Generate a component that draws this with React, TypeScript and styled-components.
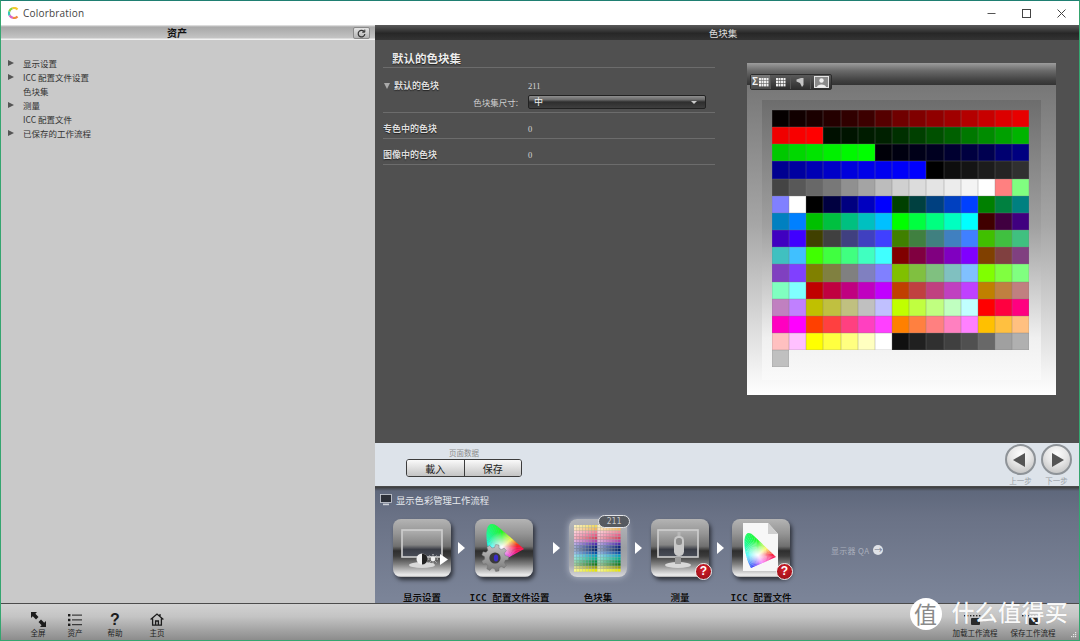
import React from 'react';
import styled, { createGlobalStyle } from 'styled-components';

const CJK = '"Noto Sans CJK SC", "Noto Sans", sans-serif';
const MONO = '"DejaVu Sans Mono", "Noto Sans CJK SC", monospace';

const GlobalStyle = createGlobalStyle`
  html, body { margin: 0; padding: 0; background: #fff; }
  * { box-sizing: border-box; }
`;

// ---- swatch data: ramps, then the 5 level colour cube
const toHex = (n: number) => n.toString(16).padStart(2, '0');
const LEVELS = [0x00, 0x40, 0x80, 0xc0, 0xff];
const cube: string[] = [];
LEVELS.forEach((r) =>
  LEVELS.forEach((g) =>
    LEVELS.forEach((b) => cube.push(`#${toHex(r)}${toHex(g)}${toHex(b)}`))
  )
);

const SWATCHES = [
  '#050000', '#110000', '#1a0000', '#240000', '#300000', '#3c0000', '#550000', '#700000', '#800000', '#900000', '#a00000', '#b40000', '#c80000', '#dc0000', '#e80000',
  '#f00000', '#f80000', '#ff0000', '#001000', '#001400', '#001c00', '#002000', '#003000', '#004000', '#005000', '#006000', '#007800', '#008c00', '#00a000', '#00b400',
  '#00c800', '#00d800', '#00e400', '#00f000', '#00f800', '#00ff00', '#000008', '#000010', '#000018', '#000020', '#000030', '#000040', '#000050', '#000070', '#000080',
  '#000090', '#0000a0', '#0000b4', '#0000c8', '#0000dc', '#0000e8', '#0000f0', '#0000f8', '#0000ff', '#000000', '#0e0e0e', '#141414', '#1c1c1c', '#242424', '#303030',
  '#444444', '#585858', '#686868', '#787878', '#909090', '#a4a4a4', '#bcbcbc', '#d0d0d0', '#dcdcdc', '#e4e4e4', '#ececec', '#f4f4f4', '#ffffff', '#ff8080', '#80ff80',
  '#8080ff', '#ffffff',
  ...cube,
  '#101010', '#202020', '#303030', '#404040', '#505050', '#686868', '#a0a0a0', '#b0b0b0',
  '#c0c0c0',
];

// ---- page frame
const Window = styled.div`
  position: relative;
  width: 1080px;
  height: 641px;
  overflow: hidden;
  display: flex;
  flex-direction: column;
  border-top: 1px solid #1f7f72;
  border-left: 1px solid #35a56f;
  border-right: 1px solid #35a56f;
  border-bottom: 1px solid #35a56f;
  font-family: ${CJK};
`;

const TitleBar = styled.div`
  height: 24px;
  flex: none;
  display: flex;
  align-items: center;
  background: #fff;
  padding-left: 7px;
`;

const AppName = styled.span`
  margin-left: 4px;
  font-family: "Open Sans", sans-serif;
  font-size: 10px;
  letter-spacing: 0.2px;
  color: #444;
`;

const WinControls = styled.div`
  margin-left: auto;
  display: flex;
`;

const WinButton = styled.div`
  width: 35px;
  height: 24px;
  display: flex;
  align-items: center;
  justify-content: center;
`;

const Body = styled.div`
  height: 578px;
  flex: none;
  display: flex;
`;

// ---- left assets panel
const LeftPanel = styled.div`
  width: 374px;
  flex: none;
  background: #c9c9c9;
`;

const AssetHeader = styled.div`
  position: relative;
  height: 15px;
  padding-right: 22px;
  display: flex;
  align-items: center;
  justify-content: center;
  background: linear-gradient(#ececec 0, #a9a9a9 2px, #b4b4b4 7px, #c4c4c4 13px, #f2f2f2 14px);
  font-size: 10px;
  font-weight: 700;
  color: #111;
`;

const RefreshButton = styled.div`
  position: absolute;
  right: 5px;
  top: 2px;
  width: 17px;
  height: 12px;
  border: 1px solid #8a8a8a;
  border-radius: 2px;
  background: linear-gradient(#e4e4e4, #b4b4b4);
  display: flex;
  align-items: center;
  justify-content: center;
`;

const Tree = styled.div`
  padding: 16px 0 0 7px;
`;

const TreeRow = styled.div`
  height: 14px;
  display: flex;
  align-items: center;
  font-size: 8.5px;
  color: #333;
`;

const TreeSlot = styled.div`
  width: 15px;
  flex: none;
`;

const TreeArrow = styled.div`
  width: 0;
  height: 0;
  border-left: 6px solid #555;
  border-top: 3.5px solid transparent;
  border-bottom: 3.5px solid transparent;
`;

// ---- right side
const RightPanel = styled.div`
  flex: 1;
  min-width: 0;
  display: flex;
  flex-direction: column;
`;

const DarkHeader = styled.div`
  height: 15px;
  flex: none;
  padding-right: 8px;
  display: flex;
  align-items: center;
  justify-content: center;
  background: linear-gradient(#5a5a5a, #272727 55%, #333);
  font-size: 9.5px;
  color: #ddd;
`;

const Content = styled.div`
  height: 403px;
  flex: none;
  display: flex;
  gap: 32px;
  padding-left: 8px;
  background: #505050;
`;

const FormColumn = styled.div`
  width: 332px;
  flex: none;
`;

const FormTitle = styled.div`
  margin-top: 8px;
  height: 20px;
  padding: 1px 0 0 9px;
  border-bottom: 1px solid #6c6c6c;
  font-size: 11.5px;
  line-height: 18px;
  font-weight: 700;
  color: #ececec;
  text-shadow: 0 1px 1px #222;
`;

const FormRow = styled.div<{ $open?: boolean }>`
  padding: ${(p) => (p.$open ? '11px 0 3px' : '9px 0 4px')};
  border-bottom: 1px solid #6c6c6c;
`;

const RowLine = styled.div`
  display: grid;
  grid-template-columns: 145px 1fr;
  height: 12px;
  align-items: center;
`;

const RowLabel = styled.div`
  display: flex;
  align-items: center;
  gap: 4px;
  font-size: 9px;
  font-weight: 700;
  color: #dcdcdc;
  text-shadow: 0 1px 1px #222;
`;

const OpenArrow = styled.span`
  margin-left: 1px;
  width: 0;
  height: 0;
  border-top: 6px solid #aaa;
  border-left: 3.5px solid transparent;
  border-right: 3.5px solid transparent;
`;

const RowValue = styled.div`
  font-family: "Liberation Serif", serif;
  font-size: 8.5px;
  color: #d6d6d6;
`;

const SelectLine = styled.div`
  margin-top: 4px;
  display: grid;
  grid-template-columns: 145px 178px;
  align-items: center;
`;

const SelectLabel = styled.div`
  padding-right: 10px;
  text-align: right;
  font-size: 8.5px;
  color: #cfcfcf;
`;

const Select = styled.div`
  height: 14px;
  display: flex;
  align-items: center;
  justify-content: space-between;
  padding: 0 8px 2px 5px;
  border: 1px solid #222;
  border-radius: 2px;
  background: linear-gradient(#8e8e8e, #6a6a6a 30%, #2e2e2e 50%, #3e3e3e);
  font-size: 9px;
  color: #f0f0f0;
`;

const SelectCaret = styled.span`
  width: 0;
  height: 0;
  margin-top: 3px;
  border-top: 3px solid #ccc;
  border-left: 3px solid transparent;
  border-right: 3px solid transparent;
`;

const Preview = styled.div`
  width: 309px;
  flex: none;
  margin-top: 23px;
`;

const PreviewBar = styled.div`
  height: 22px;
  padding: 3px;
  background: linear-gradient(#9c9c9c, #6a6a6a 35%, #404040 80%, #333);
`;

const ToolGroup = styled.div`
  display: inline-flex;
  height: 16px;
  border: 1px solid #2c2c2c;
  border-radius: 2px;
  background: linear-gradient(#5a5a5a, #2e2e2e);
`;

const ToolButton = styled.div<{ $active?: boolean }>`
  width: 20px;
  display: flex;
  align-items: center;
  justify-content: center;
  gap: 1px;
  border-right: 1px solid #555;
  background: ${(p) => (p.$active ? 'linear-gradient(#7a7a7a, #484848)' : 'transparent')};
  &:last-child { border-right: 0; }
`;

const Sigma = styled.span`
  font-family: "Liberation Sans", sans-serif;
  font-size: 10px;
  font-weight: 700;
  line-height: 1;
  color: #f2f2f2;
`;

const SwatchStage = styled.div`
  height: 310px;
  padding: 15px 15px 15px;
  background: linear-gradient(#777, #a6a6a6 45%, #fff);
`;

const SwatchInner = styled.div`
  height: 280px;
  padding: 10px 0 0 10px;
  background: linear-gradient(#6d6d6d, #a0a0a0 45%, #f0f0f0 85%, #fafafa);
`;

const SwatchGrid = styled.div`
  display: grid;
  grid-template-columns: repeat(15, 17.17px);
  grid-auto-rows: 17.17px;
`;

const Swatch = styled.div`
  box-shadow: inset 0 0 0 0.5px rgba(120, 120, 120, 0.35);
`;

// ---- page data strip
const DataBar = styled.div`
  height: 43px;
  flex: none;
  display: flex;
  background: #dde3ea;
  padding: 1px 7px 0 31px;
`;

const DataGroup = styled.div`
  width: 116px;
  display: flex;
  flex-direction: column;
  align-items: center;
  padding-top: 4px;
`;

const DataCaption = styled.div`
  font-size: 7.5px;
  line-height: 10px;
  color: #8c8c8c;
`;

const Segmented = styled.div`
  width: 116px;
  height: 18px;
  margin-top: 1px;
  display: flex;
  border: 1px solid #3c3c3c;
  border-radius: 3px;
  overflow: hidden;
`;

const SegmentButton = styled.div`
  flex: 1;
  display: flex;
  align-items: center;
  justify-content: center;
  background: linear-gradient(#fafafa, #c4c4c4);
  font-size: 10px;
  color: #222;
  & + & { border-left: 1px solid #3c3c3c; }
`;

const NavGroup = styled.div`
  margin-left: auto;
  display: flex;
  gap: 5px;
`;

const NavItem = styled.div`
  width: 31px;
  display: flex;
  flex-direction: column;
  align-items: center;
`;

const NavCircle = styled.div`
  width: 31px;
  height: 31px;
  border-radius: 50%;
  border: 2px solid #8e9398;
  background: radial-gradient(circle at 50% 30%, #fdfdfd, #e6e6e6 45%, #b8b8b8);
  display: flex;
  align-items: center;
  justify-content: center;
`;

const NavTriangle = styled.div<{ $back?: boolean }>`
  width: 0;
  height: 0;
  border-top: 7px solid transparent;
  border-bottom: 7px solid transparent;
  ${(p) =>
    p.$back
      ? 'border-right: 12px solid #555; margin-right: 3px;'
      : 'border-left: 12px solid #555; margin-left: 3px;'}
`;

const NavLabel = styled.div`
  margin-top: 1px;
  font-size: 7.5px;
  line-height: 10px;
  white-space: nowrap;
  color: #9a9fa6;
`;

// ---- workflow strip
const Workflow = styled.div`
  height: 117px;
  flex: none;
  overflow: hidden;
  border-top: 1px solid #4a4a4a;
  background: linear-gradient(#3c3c3c 0, #5f687c 4px, #6a7286 30px, #7c8599);
`;

const WorkflowHead = styled.div`
  height: 13px;
  margin: 6px 0 13px 5px;
  display: flex;
  align-items: center;
  gap: 4px;
  font-size: 9.3px;
  color: #e4e7ec;
`;

const FlowRow = styled.div`
  display: flex;
  align-items: flex-start;
  padding-left: 18px;
`;

const FlowItem = styled.div`
  width: 58px;
  flex: none;
  display: flex;
  flex-direction: column;
  align-items: center;
`;

const Tile = styled.div<{ $light?: boolean }>`
  position: relative;
  width: 58px;
  height: 58px;
  border-radius: 8px;
  background: ${(p) =>
    p.$light
      ? 'linear-gradient(#b4b6ba, #9c9ea3 50%, #a8aaaf 80%, #d8d8da)'
      : 'linear-gradient(#b4b4b4, #959595 25%, #707070 47%, #2e2e2e 55%, #3c3c3c 64%, #808080 78%, #d8d8d8 93%, #eee 97%, #aaa)'};
  box-shadow: ${(p) =>
    p.$light
      ? '0 0 7px rgba(235, 240, 250, 0.55)'
      : '2px 3px 4px rgba(0, 0, 0, 0.6)'};
`;

const FlowLabel = styled.div<{ $nudge?: number }>`
  margin: 15px 0 0 ${(p) => p.$nudge || 0}px;
  font-family: ${MONO};
  font-size: 9.5px;
  line-height: 12px;
  font-weight: 700;
  white-space: nowrap;
  color: #0c0c0c;
  text-shadow: 0 0 1px rgba(255, 255, 255, 0.3);
`;

const Connector = styled.div<{ $w: number; $pad: number }>`
  width: ${(p) => p.$w}px;
  height: 58px;
  flex: none;
  padding-left: ${(p) => p.$pad}px;
  display: flex;
  align-items: center;
`;

const ConnectorArrow = styled.div`
  width: 0;
  height: 0;
  border-left: 7px solid #fff;
  border-top: 6px solid transparent;
  border-bottom: 6px solid transparent;
`;

const CountPill = styled.div`
  position: absolute;
  top: -4px;
  right: -3px;
  width: 32px;
  height: 13px;
  border: 1px solid #e4e6ea;
  border-radius: 7px;
  background: #565a60;
  text-align: center;
  font-family: ${MONO};
  font-size: 8px;
  line-height: 11px;
  color: #c8c8c8;
`;

const ErrorBadge = styled.div`
  position: absolute;
  right: -3px;
  bottom: -3px;
  width: 17px;
  height: 17px;
  border: 1.5px solid #eee;
  border-radius: 50%;
  background: radial-gradient(circle at 50% 35%, #d8202c, #8e0d14);
  text-align: center;
  font-family: "Liberation Sans", sans-serif;
  font-size: 12px;
  line-height: 14px;
  font-weight: 700;
  color: #fff;
`;

const QaLink = styled.div`
  height: 58px;
  margin: 2px 0 0 41px;
  display: flex;
  align-items: center;
  gap: 4px;
  font-size: 8px;
  letter-spacing: 0.3px;
  color: #a9afbc;
`;

const QaCircle = styled.div`
  width: 10px;
  height: 10px;
  border-radius: 50%;
  background: #dfe2e7;
  display: flex;
  align-items: center;
  justify-content: center;
  font-size: 8px;
  line-height: 1;
  color: #6c7488;
`;

// ---- bottom toolbar
const BottomBar = styled.div`
  position: relative;
  height: 37px;
  flex: none;
  display: flex;
  padding-left: 19px;
  border-top: 1px solid #4c4c4c;
  background: linear-gradient(#d2d2d2, #c4c4c4 35%, #8c8c8c);
`;

const BarTool = styled.div<{ $gap?: number }>`
  width: 36px;
  margin-left: ${(p) => p.$gap || 0}px;
  padding-top: 8px;
  display: flex;
  flex-direction: column;
  align-items: center;
`;

const BarIcon = styled.div`
  height: 15px;
  display: flex;
  align-items: center;
  justify-content: center;
  font-family: "Liberation Sans", sans-serif;
  font-size: 16px;
  font-weight: 700;
  color: #1c1c1c;
`;

const BarLabel = styled.div`
  margin-top: 1px;
  font-size: 7.5px;
  line-height: 10px;
  white-space: nowrap;
  color: #222;
`;

const BarRight = styled.div`
  margin-left: auto;
  padding-right: 23px;
  display: flex;
  gap: 12px;
`;

const BarRightTool = styled(BarTool)`
  width: 46px;
`;

const GripMark = styled.svg`
  position: absolute;
  right: 2px;
  bottom: 2px;
`;

const Watermark = styled.div`
  position: absolute;
  right: 11px;
  bottom: 10px;
  display: flex;
  align-items: center;
  gap: 10px;
`;

const MarkCircle = styled.div`
  width: 32px;
  height: 32px;
  border-radius: 50%;
  background: #fff;
  text-align: center;
  font-size: 23px;
  line-height: 30px;
  color: #8a8a8a;
`;

const MarkText = styled.div`
  margin-top: -6px;
  font-size: 23px;
  line-height: 24px;
  font-weight: 500;
  letter-spacing: 0.3px;
  color: rgba(255, 255, 255, 0.95);
  text-shadow: 0 0 1px rgba(0, 0, 0, 0.15);
`;

// ---- drawings
const Logo = () => (
  <svg width="11" height="12" viewBox="0 0 11 12">
    <g fill="none" strokeWidth="2.2">
      <path d="M9.5 2.5 A5 5 0 0 0 4.5 1.2" stroke="#f6c92c" />
      <path d="M4.5 1.2 A5 5 0 0 0 1.2 4.6" stroke="#8ccf3a" />
      <path d="M1.2 4.6 A5 5 0 0 0 1.6 8.4" stroke="#35c7b8" />
      <path d="M1.6 8.4 A5 5 0 0 0 5 10.9" stroke="#d968c8" />
      <path d="M5 10.9 A5 5 0 0 0 9.5 9.4" stroke="#f08a3c" />
    </g>
  </svg>
);

const MiniGrid = () => (
  <svg width="10" height="9" viewBox="0 0 10 9">
    {[0, 1, 2].map((r) =>
      [0, 1, 2, 3].map((c) => (
        <rect key={`${r}-${c}`} x={c * 2.5} y={r * 3} width="2" height="2.4" fill="#eee" />
      ))
    )}
  </svg>
);

const HUE_STOPS: [number, number][] = [
  [-60, 300], [0, 350], [40, 420], [90, 480], [180, 540], [240, 590], [300, 660],
];

const hueAt = (a: number) => {
  for (let i = 1; i < HUE_STOPS.length; i++) {
    const [a0, h0] = HUE_STOPS[i - 1];
    const [a1, h1] = HUE_STOPS[i];
    if (a <= a1) return h0 + ((a - a0) / (a1 - a0)) * (h1 - h0);
  }
  return 300;
};

// horseshoe filled with a fan of hue wedges around the white point
const GamutFan = ({ id, d, cx, cy }: { id: string; d: string; cx: number; cy: number }) => {
  const wedges = [];
  for (let a = -60; a < 300; a += 6) {
    const a0 = (a * Math.PI) / 180;
    const a1 = ((a + 6.6) * Math.PI) / 180;
    wedges.push(
      <polygon
        key={a}
        points={`${cx},${cy} ${cx + 70 * Math.cos(a0)},${cy - 70 * Math.sin(a0)} ${cx + 70 * Math.cos(a1)},${cy - 70 * Math.sin(a1)}`}
        fill={`hsl(${hueAt(a + 3) % 360}, 95%, 55%)`}
      />
    );
  }
  return (
    <>
      <defs>
        <clipPath id={`${id}-clip`}>
          <path d={d} />
        </clipPath>
        <radialGradient id={`${id}-white`}>
          <stop offset="0" stopColor="#fff" />
          <stop offset="1" stopColor="#fff" stopOpacity="0" />
        </radialGradient>
      </defs>
      <g clipPath={`url(#${id}-clip)`}>
        {wedges}
        <circle cx={cx} cy={cy} r="15" fill={`url(#${id}-white)`} />
      </g>
    </>
  );
};

const gearPath = (cx: number, cy: number, rOut: number, rIn: number, teeth: number) => {
  const pts: string[] = [];
  const step = (Math.PI * 2) / teeth;
  for (let i = 0; i < teeth; i++) {
    const t = i * step;
    [
      [t - step * 0.32, rIn],
      [t - step * 0.18, rOut],
      [t + step * 0.18, rOut],
      [t + step * 0.32, rIn],
    ].forEach(([a, r]) => pts.push(`${cx + r * Math.cos(a)},${cy + r * Math.sin(a)}`));
  }
  return `M${pts.join(' L')} Z`;
};

const TileSvg = styled.svg`
  position: absolute;
  left: 0;
  top: 0;
`;

const MonitorFrame = ({ id, x }: { id: string; x: number }) => (
  <>
    <defs>
      <linearGradient id={id} x1="0" y1="0" x2="0" y2="1">
        <stop offset="0" stopColor="#b0b0b0" />
        <stop offset="0.55" stopColor="#858585" />
        <stop offset="0.72" stopColor="#3a3d46" />
        <stop offset="1" stopColor="#4a4e58" />
      </linearGradient>
    </defs>
    <rect x={x} y="11" width="40" height="27" fill={`url(#${id})`} stroke="#cfcfcf" strokeWidth="1.6" />
    <ellipse cx={x + 20} cy="46" rx="13" ry="3" fill="#d8d8d8" />
    <rect x={x + 17} y="38" width="6" height="7" fill="#9a9a9a" />
  </>
);

const DisplayIcon = () => (
  <TileSvg width="58" height="58" viewBox="0 0 58 58">
    <MonitorFrame id="mon-a" x={9} />
    <circle cx="29" cy="40" r="5.5" fill="#f0f0f0" />
    <path d="M29 34.5 A5.5 5.5 0 0 1 29 45.5 Z" fill="#222" />
    <circle cx="40" cy="40" r="2.4" fill="#f0f0f0" />
    <g stroke="#f0f0f0" strokeWidth="0.9">
      <path d="M40 35 V36.4 M40 43.6 V45 M35 40 H36.4 M43.6 40 H45 M36.6 36.6 L37.5 37.5 M42.5 42.5 L43.4 43.4 M43.4 36.6 L42.5 37.5 M37.5 42.5 L36.6 43.4" />
    </g>
    <polygon points="47,35 55,40.5 47,46" fill="#fff" />
  </TileSvg>
);

const ProfileIcon = () => (
  <TileSvg width="58" height="58" viewBox="0 0 58 58">
    <defs>
      <linearGradient id="gear-fill" x1="0" y1="0" x2="0" y2="1">
        <stop offset="0" stopColor="#c4c4c4" />
        <stop offset="1" stopColor="#787878" />
      </linearGradient>
    </defs>
    <GamutFan id="gam-a" d="M16 5 C11 6 11 16 12 24 C13 32 16 40 20 46 L49 30 L22 7 Q19 4.5 16 5 Z" cx={27} cy={28} />
    <path d={gearPath(20, 39, 13.5, 10.5, 9)} fill="url(#gear-fill)" stroke="#666" strokeWidth="0.4" />
    <circle cx="20" cy="39" r="5.6" fill="#3a3a3a" />
    <ellipse cx="21" cy="39" rx="2.2" ry="3.6" fill="#3a2cc8" />
  </TileSvg>
);

const ROW_STOPS = [
  '#f0d860', '#f0b860', '#f08898', '#e86088', '#d84860', '#b048a8', '#5030b0',
  '#102880', '#082868', '#0850a8', '#08a0c0', '#08b090', '#089048', '#187818', '#98a010', '#e8e800',
];

const PatchIcon = () => {
  const cells = [];
  const size = 47 / 16;
  for (let r = 0; r < 16; r++) {
    for (let c = 0; c < 16; c++) {
      // each half of the chart fades from pale on its left to full colour
      const lift = 0.6 * (1 - (c % 8) / 7);
      cells.push(
        <g key={`${r}-${c}`}>
          <rect x={5 + c * size} y={6 + r * size} width={size - 0.4} height={size - 0.4} fill={ROW_STOPS[r]} />
          <rect x={5 + c * size} y={6 + r * size} width={size - 0.4} height={size - 0.4} fill="#fff" opacity={lift} />
        </g>
      );
    }
  }
  return (
    <TileSvg width="58" height="58" viewBox="0 0 58 58">
      {cells}
    </TileSvg>
  );
};

const MeasureIcon = () => (
  <TileSvg width="58" height="58" viewBox="0 0 58 58">
    <MonitorFrame id="mon-b" x={7} />
    <rect x="26.5" y="13" width="3" height="5" fill="#b8b8b8" />
    <rect x="23" y="17" width="10" height="20" rx="4.5" fill="#c8c8c8" />
    <rect x="25" y="19" width="6" height="7" rx="2.5" fill="#8c8c8c" />
  </TileSvg>
);

const DocumentIcon = () => (
  <TileSvg width="58" height="58" viewBox="0 0 58 58">
    <polygon points="11,4 36,4 46,15 46,52 11,52" fill="#f7f7f7" />
    <polygon points="36,4 46,15 36,15" fill="#cfcfcf" />
    <GamutFan id="gam-b" d="M16 14 C10 16 12 36 19 49 L44 38 L22 17 Q19 13.5 16 14 Z" cx={26} cy={36} />
  </TileSvg>
);

const FullscreenIcon = () => (
  <svg width="15" height="15" viewBox="0 0 15 15" fill="#1c1c1c">
    <polygon points="0,0 6,0 4.4,1.8 7.5,5 5,7.4 1.8,4.2 0,6" />
    <polygon points="15,15 9,15 10.6,13.2 7.5,10 10,7.6 13.2,10.8 15,9" />
  </svg>
);

const ListIcon = () => (
  <svg width="14" height="12" viewBox="0 0 14 12" fill="#1c1c1c">
    <rect x="0" y="0" width="2.4" height="2.4" />
    <rect x="0" y="4.8" width="2.4" height="2.4" />
    <rect x="0" y="9.6" width="2.4" height="2.4" />
    <rect x="4" y="0.6" width="10" height="1" />
    <rect x="4" y="5.4" width="10" height="1" />
    <rect x="4" y="10.2" width="10" height="1" />
  </svg>
);

const HomeIcon = () => (
  <svg width="14" height="13" viewBox="0 0 14 13" fill="none" stroke="#1c1c1c" strokeWidth="1.3">
    <path d="M0.6 6.6 L7 1 L13.4 6.6 M2.6 5.4 V12.2 H11.4 V5.4 M5.6 12.2 V8 H8.4 V12.2 M10 1 V3" />
  </svg>
);

const WorkflowFileIcon = () => (
  <svg width="22" height="13" viewBox="0 0 22 13" fill="#2a2a2a">
    <rect x="0" y="2" width="1.4" height="1.4" />
    <rect x="3" y="2" width="1.4" height="1.4" />
    <rect x="6" y="2" width="1.4" height="1.4" />
    <rect x="9" y="2" width="1.4" height="1.4" />
    <rect x="12" y="2" width="1.4" height="1.4" />
    <rect x="15" y="2" width="1.4" height="1.4" />
    <rect x="7" y="5" width="9" height="7" rx="1" />
  </svg>
);

const TREE = [
  { label: '显示设置', arrow: true },
  { label: 'ICC 配置文件设置', arrow: true },
  { label: '色块集', arrow: false },
  { label: '测量', arrow: true },
  { label: 'ICC 配置文件', arrow: false },
  { label: '已保存的工作流程', arrow: true },
];

const App = () => (
  <>
    <GlobalStyle />
    <Window>
      <TitleBar>
        <Logo />
        <AppName>Colorbration</AppName>
        <WinControls>
          <WinButton>
            <svg width="9" height="9" viewBox="0 0 9 9" stroke="#555" strokeWidth="1">
              <path d="M0.5 4.5 H8.5" />
            </svg>
          </WinButton>
          <WinButton>
            <svg width="9" height="9" viewBox="0 0 9 9" fill="none" stroke="#444" strokeWidth="1">
              <rect x="0.5" y="0.5" width="8" height="8" />
            </svg>
          </WinButton>
          <WinButton>
            <svg width="9" height="9" viewBox="0 0 9 9" stroke="#444" strokeWidth="1">
              <path d="M0.5 0.5 L8.5 8.5 M8.5 0.5 L0.5 8.5" />
            </svg>
          </WinButton>
        </WinControls>
      </TitleBar>

      <Body>
        <LeftPanel>
          <AssetHeader>
            资产
            <RefreshButton>
              <svg width="9" height="9" viewBox="0 0 9 9" fill="none" stroke="#333" strokeWidth="1.2">
                <path d="M7.4 3 A3.3 3.3 0 1 0 7.8 5" />
                <path d="M7.8 0.6 V3.2 H5.2" strokeWidth="1" />
              </svg>
            </RefreshButton>
          </AssetHeader>
          <Tree>
            {TREE.map((item) => (
              <TreeRow key={item.label}>
                <TreeSlot>{item.arrow && <TreeArrow />}</TreeSlot>
                {item.label}
              </TreeRow>
            ))}
          </Tree>
        </LeftPanel>

        <RightPanel>
          <DarkHeader>色块集</DarkHeader>
          <Content>
            <FormColumn>
              <FormTitle>默认的色块集</FormTitle>
              <FormRow $open>
                <RowLine>
                  <RowLabel>
                    <OpenArrow />
                    默认的色块
                  </RowLabel>
                  <RowValue>211</RowValue>
                </RowLine>
                <SelectLine>
                  <SelectLabel>色块集尺寸:</SelectLabel>
                  <Select>
                    中
                    <SelectCaret />
                  </Select>
                </SelectLine>
              </FormRow>
              <FormRow>
                <RowLine>
                  <RowLabel>专色中的色块</RowLabel>
                  <RowValue>0</RowValue>
                </RowLine>
              </FormRow>
              <FormRow>
                <RowLine>
                  <RowLabel>图像中的色块</RowLabel>
                  <RowValue>0</RowValue>
                </RowLine>
              </FormRow>
            </FormColumn>

            <Preview>
              <PreviewBar>
                <ToolGroup>
                  <ToolButton $active>
                    <Sigma>Σ</Sigma>
                    <MiniGrid />
                  </ToolButton>
                  <ToolButton>
                    <MiniGrid />
                  </ToolButton>
                  <ToolButton>
                    <svg width="9" height="11" viewBox="0 0 9 11">
                      <path d="M0.5 2.5 L5 1 H7.5 V8 L6 10 L4 6 L0.5 4.5 Z" fill="#c4c4c4" />
                    </svg>
                  </ToolButton>
                  <ToolButton>
                    <svg width="15" height="12" viewBox="0 0 15 12">
                      <rect x="0.5" y="0.5" width="14" height="11" fill="#8a8a8a" stroke="#e4e4e4" />
                      <circle cx="7.5" cy="4.5" r="2.2" fill="#eee" />
                      <path d="M3 11 C3 7.5 12 7.5 12 11 Z" fill="#eee" />
                    </svg>
                  </ToolButton>
                </ToolGroup>
              </PreviewBar>
              <SwatchStage>
                <SwatchInner>
                  <SwatchGrid>
                    {SWATCHES.map((color, i) => (
                      <Swatch key={i} style={{ background: color }} />
                    ))}
                  </SwatchGrid>
                </SwatchInner>
              </SwatchStage>
            </Preview>
          </Content>

          <DataBar>
            <DataGroup>
              <DataCaption>页面数据</DataCaption>
              <Segmented>
                <SegmentButton>載入</SegmentButton>
                <SegmentButton>保存</SegmentButton>
              </Segmented>
            </DataGroup>
            <NavGroup>
              <NavItem>
                <NavCircle>
                  <NavTriangle $back />
                </NavCircle>
                <NavLabel>上一步</NavLabel>
              </NavItem>
              <NavItem>
                <NavCircle>
                  <NavTriangle />
                </NavCircle>
                <NavLabel>下一步</NavLabel>
              </NavItem>
            </NavGroup>
          </DataBar>

          <Workflow>
            <WorkflowHead>
              <svg width="12" height="12" viewBox="0 0 12 12">
                <rect x="0.5" y="0.5" width="11" height="8" fill="#2c3038" stroke="#cfd3da" strokeWidth="0.8" />
                <rect x="3" y="9.6" width="6" height="1.6" fill="#cfd3da" />
              </svg>
              显示色彩管理工作流程
            </WorkflowHead>
            <FlowRow>
              <FlowItem>
                <Tile>
                  <DisplayIcon />
                </Tile>
                <FlowLabel>显示设置</FlowLabel>
              </FlowItem>
              <Connector $w={24} $pad={7}>
                <ConnectorArrow />
              </Connector>
              <FlowItem>
                <Tile>
                  <ProfileIcon />
                </Tile>
                <FlowLabel $nudge={11}>ICC 配置文件设置</FlowLabel>
              </FlowItem>
              <Connector $w={36} $pad={20}>
                <ConnectorArrow />
              </Connector>
              <FlowItem>
                <Tile $light>
                  <PatchIcon />
                  <CountPill>211</CountPill>
                </Tile>
                <FlowLabel>色块集</FlowLabel>
              </FlowItem>
              <Connector $w={24} $pad={8}>
                <ConnectorArrow />
              </Connector>
              <FlowItem>
                <Tile>
                  <MeasureIcon />
                  <ErrorBadge>?</ErrorBadge>
                </Tile>
                <FlowLabel>测量</FlowLabel>
              </FlowItem>
              <Connector $w={23} $pad={8}>
                <ConnectorArrow />
              </Connector>
              <FlowItem>
                <Tile>
                  <DocumentIcon />
                  <ErrorBadge>?</ErrorBadge>
                </Tile>
                <FlowLabel>ICC 配置文件</FlowLabel>
              </FlowItem>
              <QaLink>
                显示器 QA
                <QaCircle>→</QaCircle>
              </QaLink>
            </FlowRow>
          </Workflow>
        </RightPanel>
      </Body>

      <BottomBar>
        <BarTool>
          <BarIcon>
            <FullscreenIcon />
          </BarIcon>
          <BarLabel>全屏</BarLabel>
        </BarTool>
        <BarTool $gap={1}>
          <BarIcon>
            <ListIcon />
          </BarIcon>
          <BarLabel>资产</BarLabel>
        </BarTool>
        <BarTool $gap={4}>
          <BarIcon>?</BarIcon>
          <BarLabel>帮助</BarLabel>
        </BarTool>
        <BarTool $gap={6}>
          <BarIcon>
            <HomeIcon />
          </BarIcon>
          <BarLabel>主页</BarLabel>
        </BarTool>
        <BarRight>
          <BarRightTool>
            <BarIcon>
              <WorkflowFileIcon />
            </BarIcon>
            <BarLabel>加载工作流程</BarLabel>
          </BarRightTool>
          <BarRightTool>
            <BarIcon>
              <WorkflowFileIcon />
            </BarIcon>
            <BarLabel>保存工作流程</BarLabel>
          </BarRightTool>
        </BarRight>
        <GripMark width="7" height="7" viewBox="0 0 7 7" fill="#e8e8e8">
          <rect x="5" y="1" width="1.2" height="1.2" />
          <rect x="3" y="3" width="1.2" height="1.2" />
          <rect x="5" y="3" width="1.2" height="1.2" />
          <rect x="1" y="5" width="1.2" height="1.2" />
          <rect x="3" y="5" width="1.2" height="1.2" />
          <rect x="5" y="5" width="1.2" height="1.2" />
        </GripMark>
      </BottomBar>

      <Watermark>
        <MarkCircle>值</MarkCircle>
        <MarkText>什么值得买</MarkText>
      </Watermark>
    </Window>
  </>
);

export default App;
